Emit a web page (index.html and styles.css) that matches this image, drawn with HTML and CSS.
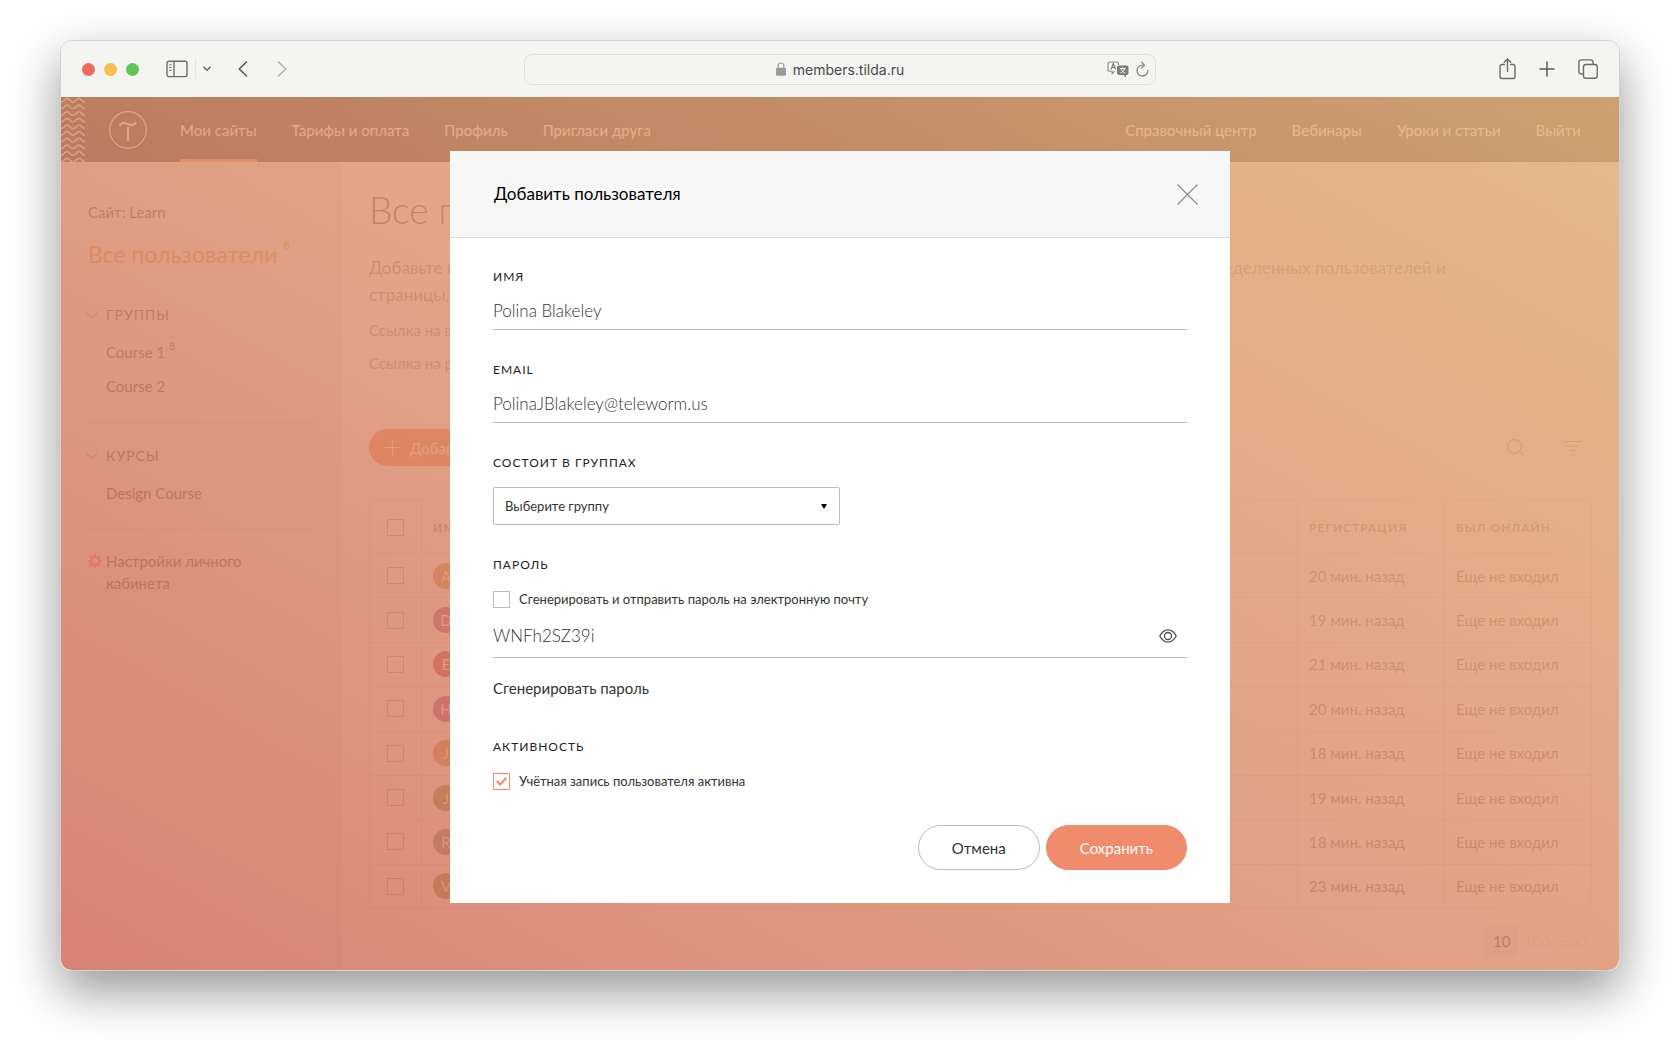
FILE: index.html
```html
<!DOCTYPE html>
<html lang="ru">
<head>
<meta charset="utf-8">
<title>Добавить пользователя</title>
<link rel="stylesheet" href="styles.css">
</head>
<body>
<div class="window">
  <div class="toolbar">
    <div class="toolbar-side">
      <span class="lights"><i class="light red"></i><i class="light yellow"></i><i class="light green"></i></span>
      <button class="tool" aria-label="Боковая панель"><svg width="22" height="18" viewBox="0 0 22 18" fill="none" stroke="#6b6b6a" stroke-width="1.4"><rect x="1" y="1.2" width="20" height="15.4" rx="2"/><path d="M8 1.2v15.4"/><path d="M3.2 4.8h2.4M3.2 7.5h2.4M3.2 10.2h2.4" stroke-width="1.1"/></svg></button>
      <span class="tool-divider"></span>
      <button class="tool tool-more" aria-label="Группы вкладок"><svg width="8" height="6" viewBox="0 0 8 6" fill="none" stroke="#6b6b6a" stroke-width="1.6" stroke-linecap="round" stroke-linejoin="round"><path d="M1 1.2l3 3 3-3"/></svg></button>
      <button class="tool tool-back" aria-label="Назад"><svg width="10" height="16" viewBox="0 0 10 16" fill="none" stroke="#5c5c5b" stroke-width="1.7" stroke-linecap="round" stroke-linejoin="round"><path d="M8.5 1L1.2 8l7.3 7"/></svg></button>
      <button class="tool tool-next" aria-label="Вперёд"><svg width="10" height="16" viewBox="0 0 10 16" fill="none" stroke="#b5b5b3" stroke-width="1.7" stroke-linecap="round" stroke-linejoin="round"><path d="M1.5 1l7.3 7-7.3 7"/></svg></button>
    </div>
    <div class="address">
      <span class="address-text"><svg width="10" height="14" viewBox="0 0 10 14"><path d="M2.2 6V3.8a2.8 2.8 0 0 1 5.6 0V6" fill="none" stroke="#a0a09f" stroke-width="1.2"/><rect y="5.8" width="10" height="8" rx="1.3" fill="#9b9b9a"/></svg>members.tilda.ru</span>
      <span class="address-tools">
        <svg width="22" height="17" viewBox="0 0 22 17"><path d="M8 10.2L5.200 12.600V10.200H3a2 2 0 0 1-2-2V3a2 2 0 0 1 2-2h6.500a2 2 0 0 1 2 2v1" fill="none" stroke="#8b8b8a" stroke-width="1.1"/><path d="M4 8.500l2.300-6 2.300 6M4.800 6.400h3" fill="none" stroke="#7c7c7b" stroke-width="1.1"/><path d="M12 4.500h7.500a2 2 0 0 1 2 2v5.500a2 2 0 0 1-2 2h-.5v2.600l-2.700-2.600H12a2 2 0 0 1-2-2V6.500a2 2 0 0 1 2-2z" fill="#7c7c7b"/><path d="M13 7.600h5.600M15.800 6.200v1.400M17.500 7.800c-.6 2-2.200 3.500-4.200 4.200M14 7.800c.6 2 2.200 3.500 4.300 4.200" fill="none" stroke="#f4f4f2" stroke-width="1"/></svg>
        <svg width="13" height="17" viewBox="0 0 13 17" fill="none" stroke="#8b8b8a" stroke-width="1.3" stroke-linecap="round" stroke-linejoin="round"><path d="M11.800 9.300A5.400 5.400 0 1 1 6.500 4.200h1.300"/><path d="M5.800 1.200l2.700 3-2.900 2.700"/></svg>
      </span>
    </div>
    <div class="toolbar-side toolbar-right">
      <button class="tool" aria-label="Поделиться"><svg width="17" height="22" viewBox="0 0 17 22" fill="none" stroke="#6b6b6a" stroke-width="1.4" stroke-linecap="round" stroke-linejoin="round"><path d="M5.400 6.500H3a2 2 0 0 0-2 2V18.500a2 2 0 0 0 2 2h11a2 2 0 0 0 2-2V8.500a2 2 0 0 0-2-2h-2.400"/><path d="M8.500 13.500V1.200M5.200 4.300l3.300-3.200 3.300 3.200"/></svg></button>
      <button class="tool" aria-label="Новая вкладка"><svg width="16" height="16" viewBox="0 0 16 16" fill="none" stroke="#5c5c5b" stroke-width="1.5" stroke-linecap="round"><path d="M8 1v14M1 8h14"/></svg></button>
      <button class="tool" aria-label="Обзор вкладок"><svg width="20" height="20" viewBox="0 0 20 20" fill="none" stroke="#6b6b6a" stroke-width="1.4"><rect x="5.500" y="5.500" width="13.700" height="13.700" rx="2.300"/><path d="M5.500 15H3.200A2.300 2.300 0 0 1 .9 12.700V3.200A2.300 2.300 0 0 1 3.200.9h9.600a2.300 2.300 0 0 1 2.300 2.300v2.300"/></svg></button>
    </div>
  </div>

  <div class="site">
    <header class="header">
      <svg class="waves" width="24" height="65" viewBox="0 0 24 65"><defs><pattern id="wave" width="12" height="6.650" patternUnits="userSpaceOnUse"><path d="M-6 1.500C-3 1.500-3 5 0 5S3 1.500 6 1.500 9 5 12 5 15 1.500 18 1.500" fill="none" stroke="#fff" stroke-width="1.400"/></pattern></defs><rect width="24" height="65" fill="url(#wave)"/></svg>
      <a href="#" class="logo" aria-label="Tilda"><svg width="38" height="38" viewBox="0 0 38 38" fill="none" stroke="#fff"><circle cx="19" cy="19" r="18.300" stroke-width="1.200"/><path d="M10.800 15.300c.8-3.600 3.600-4.300 8-2.300s7.200 1.100 8-1.900" stroke-width="2.200"/><path d="M19 16v14" stroke-width="2.200"/></svg></a>
      <nav class="nav">
        <a href="#" class="active">Мои сайты</a><a href="#">Тарифы и оплата</a><a href="#">Профиль</a><a href="#">Пригласи друга</a>
      </nav>
      <nav class="nav nav-right">
        <a href="#">Справочный центр</a><a href="#">Вебинары</a><a href="#">Уроки и статьи</a><a href="#">Выйти</a>
      </nav>
    </header>

    <div class="columns">
      <aside class="sidebar">
        <p class="site-name">Сайт: Learn</p>
        <a href="#" class="all-users">Все пользователи <sup>8</sup></a>
        <section class="group">
          <h2><svg width="13" height="8" viewBox="0 0 13 8" fill="none" stroke="#555" stroke-width="1"><path d="M.5 1l6 5.500 6-5.500"/></svg>ГРУППЫ</h2>
          <a href="#">Course 1 <sup>8</sup></a>
          <a href="#">Course 2</a>
        </section>
        <section class="group">
          <h2><svg width="13" height="8" viewBox="0 0 13 8" fill="none" stroke="#555" stroke-width="1"><path d="M.5 1l6 5.500 6-5.500"/></svg>КУРСЫ</h2>
          <a href="#">Design Course</a>
        </section>
        <a href="#" class="settings"><svg width="14" height="14" viewBox="0 0 14 14" fill="none" stroke="#fa6a3c"><circle cx="7" cy="7" r="4" stroke-width="2.400"/><path d="M7 0v2M7 12v2M0 7h2M12 7h2M2 2l1.500 1.500M10.500 10.500L12 12M2 12l1.500-1.500M10.500 3.500L12 2" stroke-width="2.200"/></svg><span>Настройки личного<br>кабинета</span></a>
      </aside>

      <main class="main">
        <h1>Все пользователи</h1>
        <p class="intro"><span>Добавьте пользователей на сайт и откройте доступ</span><span>к страницам для определенных пользователей и</span></p>
        <p class="intro">страницы, доступные группе</p>
        <p class="link-line">Ссылка на вход</p>
        <p class="link-line">Ссылка на регистрацию</p>
        <div class="actions">
          <button class="add"><svg width="15" height="15" viewBox="0 0 15 15" stroke="#fff" stroke-width="1.200"><path d="M7.500 0v15M0 7.500h15"/></svg>Добавить пользователя</button>
          <button class="tool" aria-label="Поиск"><svg width="17" height="17" viewBox="0 0 17 17" fill="none" stroke="#777" stroke-width="1.100"><circle cx="7.500" cy="7.500" r="6.900"/><path d="M12.300 12.300l4.300 4.300"/></svg></button>
          <button class="tool" aria-label="Фильтр"><svg width="18" height="16" viewBox="0 0 18 16" fill="none" stroke="#777" stroke-width="1.200"><path d="M0 1.500h18M2.500 6h13M5 10.500h8M7 15h4"/></svg></button>
        </div>
        <table class="users">
          <thead><tr><th class="c-check"><input type="checkbox" aria-label="Выбрать всех"></th><th class="c-name">ИМЯ</th><th>EMAIL</th><th class="c-date">РЕГИСТРАЦИЯ</th><th class="c-date">БЫЛ ОНЛАЙН</th></tr></thead>
          <tbody>
            <tr><td class="c-check"><input type="checkbox" aria-label="Выбрать"></td><td><span class="avatar amber">A</span></td><td></td><td>20 мин. назад</td><td>Еще не входил</td></tr>
            <tr><td class="c-check"><input type="checkbox" aria-label="Выбрать"></td><td><span class="avatar plum">D</span></td><td></td><td>19 мин. назад</td><td>Еще не входил</td></tr>
            <tr><td class="c-check"><input type="checkbox" aria-label="Выбрать"></td><td><span class="avatar brick">E</span></td><td></td><td>21 мин. назад</td><td>Еще не входил</td></tr>
            <tr><td class="c-check"><input type="checkbox" aria-label="Выбрать"></td><td><span class="avatar plum">H</span></td><td></td><td>20 мин. назад</td><td>Еще не входил</td></tr>
            <tr><td class="c-check"><input type="checkbox" aria-label="Выбрать"></td><td><span class="avatar amber">J</span></td><td></td><td>18 мин. назад</td><td>Еще не входил</td></tr>
            <tr><td class="c-check"><input type="checkbox" aria-label="Выбрать"></td><td><span class="avatar olive">J</span></td><td></td><td>19 мин. назад</td><td>Еще не входил</td></tr>
            <tr><td class="c-check"><input type="checkbox" aria-label="Выбрать"></td><td><span class="avatar sage">R</span></td><td></td><td>18 мин. назад</td><td>Еще не входил</td></tr>
            <tr><td class="c-check"><input type="checkbox" aria-label="Выбрать"></td><td><span class="avatar olive">V</span></td><td></td><td>23 мин. назад</td><td>Еще не входил</td></tr>
          </tbody>
        </table>
        <nav class="sizes"><a href="#" class="current">10</a><a href="#">100</a><a href="#">500</a></nav>
      </main>
    </div>

    <div class="overlay">
      <form class="modal" role="dialog" aria-labelledby="title">
        <div class="modal-head">
          <h2 id="title">Добавить пользователя</h2>
          <button type="button" class="tool" aria-label="Закрыть"><svg width="21" height="21" viewBox="0 0 21 21" stroke="#8a8a8a" stroke-width="1.100"><path d="M.5.5l20 20M20.500.5l-20 20"/></svg></button>
        </div>
        <div class="modal-body">
          <div class="field">
            <label class="caption" for="name">ИМЯ</label>
            <input class="line" id="name" type="text" value="Polina Blakeley">
          </div>
          <div class="field">
            <label class="caption" for="email">EMAIL</label>
            <input class="line" id="email" type="email" value="PolinaJBlakeley@teleworm.us">
          </div>
          <div class="field">
            <label class="caption" for="groups">СОСТОИТ В ГРУППАХ</label>
            <select id="groups" class="select"><option>Выберите группу</option></select>
          </div>
          <div class="field">
            <label class="caption" for="password">ПАРОЛЬ</label>
            <label class="check"><input type="checkbox">Сгенерировать и отправить пароль на электронную почту</label>
            <div class="password">
              <input class="line" id="password" type="text" value="WNFh2SZ39i">
              <button type="button" class="tool eye" aria-label="Показать пароль"><svg width="18" height="14" viewBox="0 0 18 14" fill="none" stroke="#4a4a4a" stroke-width="1.300"><path d="M.8 7C3 2.900 5.700.9 9 .9S15 2.900 17.200 7C15 11.100 12.300 13.100 9 13.100S3 11.100.8 7z"/><circle cx="9" cy="7" r="3.500"/></svg></button>
            </div>
            <a href="#" class="generate">Сгенерировать пароль</a>
          </div>
          <div class="field">
            <span class="caption">АКТИВНОСТЬ</span>
            <label class="check"><input type="checkbox" checked>Учётная запись пользователя активна</label>
          </div>
          <div class="buttons">
            <button type="button" class="button cancel">Отмена</button>
            <button type="submit" class="button save">Сохранить</button>
          </div>
        </div>
      </form>
    </div>
  </div>
</div>
</body>
</html>
```

FILE: styles.css
```css
* { box-sizing: border-box; }

body {
  margin: 0;
  padding: 40px 60px 80px;
  background: #fff;
  color: #000;
  font-family: Lato, "Open Sans", sans-serif;
  font-size: 15px;
}

h1, h2, p { margin: 0; font-weight: 400; }
a { color: inherit; text-decoration: none; }
button, input, select { font: inherit; color: inherit; }
svg { display: block; flex: none; }

.window {
  border: 1px solid rgba(0, 0, 0, .18);
  border-radius: 12px;
  background-clip: padding-box;
  box-shadow: 0 20px 50px rgba(0, 0, 0, .42);
  overflow: hidden;
}

.tool {
  display: flex;
  padding: 0;
  border: 0;
  background: none;
}

/* Browser toolbar */
.toolbar {
  display: flex;
  align-items: center;
  height: 56px;
  padding: 0 21px;
  background: #f4f4f2;
}

.toolbar-side { display: flex; flex: 1; align-items: center; }
.toolbar-right { justify-content: flex-end; gap: 23px; }
.lights { display: flex; gap: 9px; margin-right: 27px; }
.light { width: 13px; height: 13px; border-radius: 50%; }
.red { background: #ec6a5e; }
.yellow { background: #f4bf4f; }
.green { background: #61c554; }
.tool-divider { width: 1px; height: 20px; margin: 0 7px; background: #e4e4e2; }
.tool-back { margin-left: 27px; }
.tool-next { margin-left: 29px; }

.address {
  display: flex;
  flex: 0 1 632px;
  align-items: center;
  height: 31px;
  padding: 0 6px;
  border: 1px solid #dededc;
  border-radius: 8px;
  color: #4a4a4a;
  font-family: Inter, "Liberation Sans", sans-serif;
  font-size: 14px;
}

.address-text { display: flex; flex: 1; align-items: center; justify-content: center; gap: 7px; padding-left: 42px; }
.address-tools { display: flex; align-items: center; gap: 7px; }

/* Site */
.site { position: relative; background: #fff; }

.header {
  display: flex;
  align-items: center;
  height: 65px;
  padding-right: 38px;
  background: #000;
  color: #fff;
}

.logo { margin: 0 33px 0 24px; }
.nav { display: flex; align-self: stretch; gap: 35px; font-weight: 500; }
.nav a { display: flex; align-items: center; border-top: 3px solid transparent; border-bottom: 3px solid transparent; }
.nav .active { border-bottom-color: #fa6a3c; }
.nav-right { margin-left: auto; }

.columns { display: flex; }

.sidebar {
  flex: 0 0 281px;
  padding: 39px 27px;
  background: #ededed;
  color: #222;
  line-height: 22px;
}

.sidebar sup { font-size: 11px; line-height: 0; vertical-align: 8px; }
.all-users { display: block; margin-top: 17px; color: #fa6a3c; font-size: 23px; line-height: 28px; }
.all-users sup { vertical-align: 14px; }
.group { padding: 36px 0 25px 18px; border-bottom: 1px solid #ccc; }
.group + .group { padding-top: 22px; }
.group h2 { display: flex; align-items: center; gap: 8px; margin-left: -21px; font-size: 14px; letter-spacing: 1px; }
.group a { display: block; margin-top: 12px; }
.group h2 + a { margin-top: 15px; }
.settings { display: flex; gap: 4px; margin-top: 20px; }
.settings svg { margin-top: 4px; }

.main { flex: 1; min-width: 0; padding: 24px 27px 13px; }
.main h1 { color: #222; font-size: 37px; font-weight: 300; line-height: 48px; }
.intro { display: flex; justify-content: space-between; max-width: 1077px; color: #777; font-size: 17px; line-height: 27px; }
h1 + .intro { margin-top: 20px; }
.link-line { margin-top: 11px; color: #777; line-height: 22px; }

.actions { display: flex; align-items: center; gap: 40px; margin: 55px 10px 34px 0; }
.add {
  display: flex;
  align-items: center;
  gap: 10px;
  height: 37px;
  margin-right: auto;
  padding: 0 16px;
  border: 0;
  border-radius: 19px;
  background: #f06030;
  color: #fff;
}

.users { width: 100%; height: 409px; border-collapse: collapse; table-layout: fixed; }
.users th, .users td { padding: 0 11px; border: 1px solid #ddd; text-align: left; }
.users th { height: 53px; color: #777; font-size: 12px; font-weight: 700; letter-spacing: 1px; }
.users td { color: #555; }
.users .c-check { width: 52px; padding: 0; text-align: center; }
.c-name { width: 184px; }
.c-date { width: 147px; }
.users input { display: block; appearance: none; width: 17px; height: 17px; margin: 0 auto; border: 1px solid #999; }

.avatar {
  display: flex;
  align-items: center;
  justify-content: center;
  width: 26px;
  height: 26px;
  border-radius: 50%;
  color: #fff;
}
.amber { background: #b07a20; }
.plum { background: #901a78; }
.brick { background: #981a10; }
.olive { background: #607010; }
.sage { background: #5f6a4a; }

.sizes { display: flex; justify-content: flex-end; gap: 2px; margin-top: 16px; padding-right: 2px; color: #ddd; }
.sizes a { min-width: 32px; padding: 0 4px; line-height: 32px; text-align: center; }
.sizes .current { background: #e8e8e8; color: #000; }

/* Dialog */
.overlay {
  position: absolute;
  inset: 0;
  display: flex;
  align-items: flex-start;
  justify-content: center;
  padding-top: 54px;
  background: linear-gradient(to top right, rgba(211, 112, 97, .85), rgba(221, 147, 112, .85) 50%, rgba(227, 178, 126, .9));
}

.modal { width: 780px; background: #fff; color: #333; }
.modal-head {
  display: flex;
  align-items: center;
  justify-content: space-between;
  height: 87px;
  padding: 0 32px 0 44px;
  border-bottom: 1px solid #ddd;
  background: #f7f7f7;
  color: #000;
}
.modal-head h2 { font-size: 17px; line-height: 24px; }

.modal-body { padding: 31px 43px 33px; }
.field { margin-bottom: 32px; }
.caption { display: block; color: #222; font-size: 12px; line-height: 16px; letter-spacing: 1px; }

.line {
  display: block;
  width: 100%;
  height: 45px;
  padding: 6px 0 0;
  border: 0;
  border-bottom: 1px solid #bbb;
  background: none;
  font-size: 17px;
  font-weight: 300;
}

.select {
  display: block;
  appearance: none;
  width: 50%;
  height: 38px;
  margin-top: 16px;
  padding: 0 11px;
  border: 1px solid #bbb;
  border-radius: 2px;
  background: #fff url("data:image/svg+xml,%3Csvg xmlns='http://www.w3.org/2000/svg' width='6' height='5'%3E%3Cpath d='M0 0h6L3 5z'/%3E%3C/svg%3E") no-repeat right 12px center;
  font-size: 13px;
}

.check { display: flex; align-items: center; gap: 9px; margin-top: 18px; font-size: 13px; line-height: 17px; }
.check input { appearance: none; width: 17px; height: 17px; margin: 0; border: 1px solid #bbb; }
.check input:checked {
  border-color: #f08b6b;
  background: url("data:image/svg+xml,%3Csvg xmlns='http://www.w3.org/2000/svg' width='11' height='9' fill='none' stroke='%23f08b6b' stroke-width='2.2'%3E%3Cpath d='M.8 4l3.400 3.500L10.200 1'/%3E%3C/svg%3E") no-repeat center;
}

.password { display: flex; align-items: center; border-bottom: 1px solid #bbb; }
.password .line { flex: 1; height: 49px; border: 0; }
.eye { margin: 6px 10px 0 0; }
.generate { display: block; margin-top: 19px; line-height: 22px; }
.field:has(.generate) { margin-bottom: 40px; }

.buttons { display: flex; justify-content: flex-end; gap: 6px; margin-top: 35px; }
.button { height: 45px; padding: 0 33px; border-radius: 23px; }
.cancel { border: 1px solid #bbb; background: #fff; }
.save { border: 1px solid #f08b6b; background: #f08b6b; color: #fff; }
```
